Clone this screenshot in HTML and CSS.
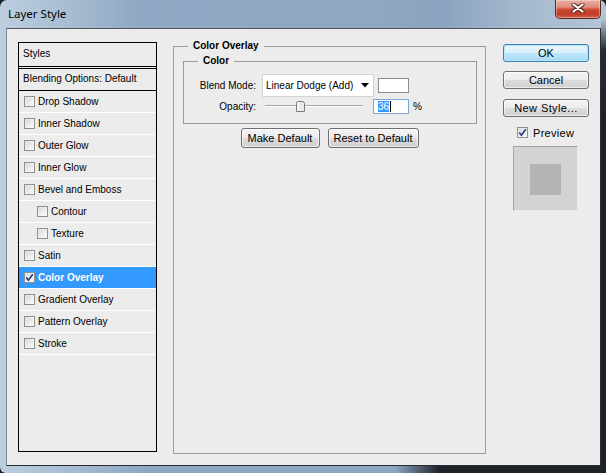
FILE: index.html
```html
<!DOCTYPE html>
<html>
<head>
<meta charset="utf-8">
<title>Layer Style</title>
<link rel="stylesheet" href="styles.css">
</head>
<body>
<div class="window">
  <div class="titlebar">
    <div class="title">Layer Style</div>
    <div class="close">
      <svg width="14" height="10" viewBox="0 0 14 10">
        <path d="M2.5 1.5 L11.5 8.5 M11.5 1.5 L2.5 8.5" stroke="#5a2a22" stroke-width="4.2" stroke-linecap="round"/>
        <path d="M2.5 1.5 L11.5 8.5 M11.5 1.5 L2.5 8.5" stroke="#ffffff" stroke-width="2.2" stroke-linecap="round"/>
      </svg>
    </div>
  </div>
  <div class="client">
    <div class="list">
      <div class="styles-head">Styles</div>
      <div class="blend-head">Blending Options: Default</div>
      <div class="item"><span class="cb"></span><span class="lbl">Drop Shadow</span></div>
      <div class="item"><span class="cb"></span><span class="lbl">Inner Shadow</span></div>
      <div class="item"><span class="cb"></span><span class="lbl">Outer Glow</span></div>
      <div class="item"><span class="cb"></span><span class="lbl">Inner Glow</span></div>
      <div class="item"><span class="cb"></span><span class="lbl">Bevel and Emboss</span></div>
      <div class="item sub"><span class="cb"></span><span class="lbl">Contour</span></div>
      <div class="item sub"><span class="cb"></span><span class="lbl">Texture</span></div>
      <div class="item"><span class="cb"></span><span class="lbl">Satin</span></div>
      <div class="item selected"><span class="cb"><svg width="9" height="9" viewBox="0 0 9 9"><path d="M1.2 4.6 L3.4 7.2 L7.8 1.3" fill="none" stroke="#26387f" stroke-width="1.6"/></svg></span><span class="lbl">Color Overlay</span></div>
      <div class="item"><span class="cb"></span><span class="lbl">Gradient Overlay</span></div>
      <div class="item"><span class="cb"></span><span class="lbl">Pattern Overlay</span></div>
      <div class="item"><span class="cb"></span><span class="lbl">Stroke</span></div>
    </div>

    <fieldset class="group">
      <legend>Color Overlay</legend>
      <fieldset class="subgroup">
        <legend>Color</legend>
        <div class="row row1">
          <span class="label">Blend Mode:</span>
          <div class="select">
            <span>Linear Dodge (Add)</span>
            <svg class="arrow" width="8" height="5" viewBox="0 0 8 5"><path d="M0 0 H8 L4 4.5 Z" fill="#000"/></svg>
          </div>
          <span class="swatch"></span>
        </div>
        <div class="row row2">
          <span class="label">Opacity:</span>
          <svg class="slider" width="98" height="15" viewBox="0 0 98 15">
            <rect x="0" y="6" width="98" height="1" fill="#a6a6a6"/>
            <rect x="0" y="7" width="98" height="1" fill="#ffffff"/>
            <path d="M31.5 4.5 Q31.5 2.5 33.5 2.5 H37.5 Q39.5 2.5 39.5 4.5 V12.5 H31.5 Z" fill="#e9e9e9" stroke="#7c7c7c"/>
            <rect x="32.5" y="3.5" width="1" height="8" fill="#ffffff"/>
          </svg>
          <div class="numbox"><span class="sel">36</span><span class="caret"></span></div>
          <span class="pct">%</span>
        </div>
      </fieldset>
      <div class="defaults">
        <button class="btn make">Make Default</button>
        <button class="btn reset">Reset to Default</button>
      </div>
    </fieldset>

    <div class="side">
      <button class="btn side-btn ok">OK</button>
      <button class="btn side-btn cancel">Cancel</button>
      <button class="btn side-btn newstyle">New Style...</button>
      <div class="preview-row">
        <span class="cb"><svg width="9" height="9" viewBox="0 0 9 9"><path d="M1.2 4.6 L3.4 7.2 L7.8 1.3" fill="none" stroke="#26387f" stroke-width="1.6"/></svg></span>
        <span class="preview-lbl">Preview</span>
      </div>
      <div class="preview-box"><div class="preview-swatch"></div></div>
    </div>
  </div>
</div>
</body>
</html>
```
FILE: styles.css
```css
* { box-sizing: border-box; }
html, body { margin: 0; padding: 0; }
body {
  width: 606px;
  height: 473px;
  overflow: hidden;
  background: #1b2027;
  font-family: "Liberation Sans", Arial, sans-serif;
  font-size: 10px;
  color: #000;
}
.window {
  width: 606px;
  height: 473px;
  display: flex;
  flex-direction: column;
  border-radius: 7px 7px 0 6px;
  overflow: hidden;
  background:
    linear-gradient(to right, rgba(29,34,41,0) 0, rgba(29,34,41,0) 395px, #1d2229 440px) left bottom / 100% 7px no-repeat,
    linear-gradient(to bottom, rgba(29,34,41,0) 18px, #262c34 50px, #1d2229 120px) right top / 5px 100% no-repeat,
    linear-gradient(to right, #bdcedf 0, #aabfd4 60px, #8fa9c4 140px, #8ea8c2 380px, #8aa3be 440px, #a5b9ce 520px, #b3c5d7 606px);
}
.titlebar {
  height: 28px;
  flex: 0 0 28px;
  display: flex;
  align-items: flex-start;
  padding-right: 5px;
}
.title {
  font-family: "Noto Sans", "Open Sans", sans-serif;
  font-size: 11.5px;
  line-height: 28px;
  padding-left: 8px;
  color: #000;
}
.close {
  margin-left: auto;
  width: 46px;
  height: 19px;
  border: 1px solid #5a2a22;
  border-top: none;
  border-radius: 0 0 5px 5px;
  background: linear-gradient(to bottom, #e9ad9f 0, #de8c7a 40%, #cc4d36 52%, #c23b26 78%, #d2634a 100%);
  box-shadow: inset 0 0 0 1px rgba(255,255,255,0.35);
  display: flex;
  align-items: center;
  justify-content: center;
  padding-bottom: 3px;
}
.close svg { display: block; }

.client {
  flex: 0 0 438px;
  margin: 0 5px 0 6px;
  border: 1px solid;
  border-color: #4e555d #2a2d31 #2a2d31 #7d8c9c;
  background: #ececec;
  display: flex;
  align-items: flex-start;
  padding: 11px 0 0 11px;
}

/* styles list */
.list {
  margin-top: 2px;
  width: 139px;
  height: 410px;
  border: 1px solid #000;
}
.styles-head {
  height: 24px;
  line-height: 22px;
  padding-left: 4px;
  border-bottom: 1px solid #000;
}
.blend-head {
  margin-top: 1px;
  height: 23px;
  line-height: 20px;
  padding-left: 4px;
  border-top: 1px solid #000;
  border-bottom: 1px solid #000;
}
.item {
  height: 22px;
  border-bottom: 1px solid #fff;
  display: flex;
  align-items: center;
  padding-left: 5px;
  padding-bottom: 1px;
}
.item.sub { padding-left: 18px; }
.item.selected {
  background: #3399ff;
  color: #fff;
  font-weight: bold;
}
.cb {
  width: 11px;
  height: 11px;
  flex: 0 0 11px;
  border: 1px solid #8e8f8f;
  background: linear-gradient(135deg, #d6d6d6 0, #eeeeee 60%, #fafafa 100%);
  box-shadow: inset 0 0 0 1px rgba(255,255,255,0.35);
  display: flex;
  align-items: center;
  justify-content: center;
}
.cb svg { display: block; }
.lbl { margin-left: 3px; }

/* main group */
fieldset { margin: 0; min-width: 0; }
.group {
  margin-left: 16px;
  width: 313px;
  height: 414px;
  border: 1px solid #9b9b9b;
  padding: 0 9px;
}
legend {
  font-weight: bold;
  font-size: 10px;
  line-height: 12px;
  padding: 0 5px;
}
.group > legend { margin-left: 5px; }
.subgroup {
  margin-top: 3px;
  width: 294px;
  height: 69px;
  border: 1px solid #9b9b9b;
  padding: 0;
}
.subgroup > legend { margin-left: 14px; }
.row {
  display: flex;
  align-items: center;
}
.row1 { margin-top: 7px; height: 23px; }
.row2 { margin-top: 2px; height: 15px; }
.label {
  width: 72px;
  text-align: right;
}
.select {
  margin-left: 6px;
  width: 112px;
  height: 23px;
  background: #fff;
  border: 1px solid #d4d4d4;
  display: flex;
  align-items: center;
  padding-left: 3px;
}
.arrow { margin-left: auto; margin-right: 4px; display: block; }
.swatch {
  margin-left: 4px;
  width: 31px;
  height: 15px;
  background: #fff;
  border: 1px solid #8c8c8c;
}
.slider { margin-left: 9px; display: block; }
.numbox {
  margin-left: 10px;
  width: 36px;
  height: 15px;
  background: #fff;
  border: 1px solid #7fa7d6;
  display: flex;
  align-items: center;
  padding-left: 4px;
}
.sel {
  background: #3399ff;
  color: #fff;
  line-height: 11px;
}
.caret {
  width: 1px;
  height: 11px;
  background: #000;
  margin-left: 1px;
}
.pct { margin-left: 4px; }

.defaults {
  margin-top: 4px;
  display: flex;
  justify-content: center;
  gap: 8px;
}
.btn {
  font-family: "Liberation Sans", Arial, sans-serif;
  font-size: 11px;
  color: #000;
  border: 1px solid #707070;
  border-radius: 3px;
  background: linear-gradient(to bottom, #f4f4f4 0, #ececec 48%, #dddddd 52%, #d0d0d0 100%);
  box-shadow: inset 0 0 0 1px rgba(255,255,255,0.6);
  padding: 0;
  margin: 0;
  display: flex;
  align-items: center;
  justify-content: center;
}
.make { width: 79px; height: 20px; }
.reset { width: 91px; height: 20px; }

/* side */
.side {
  margin-left: 17px;
  margin-top: 4px;
  display: flex;
  flex-direction: column;
  width: 86px;
}
.side-btn { width: 86px; height: 18px; }
.ok {
  border-color: #3c7fb1;
  background: linear-gradient(to bottom, #eaf6fd 0, #d9f0fc 48%, #bee6fd 52%, #a7d9f5 100%);
  box-shadow: inset 0 0 0 1px #b8e6fb;
}
.cancel { margin-top: 9px; }
.newstyle { margin-top: 10px; letter-spacing: 0.4px; }
.preview-row {
  margin-top: 10px;
  margin-left: 14px;
  display: flex;
  align-items: center;
  height: 11px;
}
.preview-lbl { margin-left: 5px; font-size: 11px; letter-spacing: 0.3px; }
.preview-box {
  margin-top: 8px;
  margin-left: 10px;
  width: 65px;
  height: 65px;
  border: 1px solid;
  border-color: #a3a3a3 #ececec #ececec #a3a3a3;
  background: #d3d3d3;
  padding: 17px 0 0 16px;
}
.preview-swatch {
  width: 31px;
  height: 31px;
  background: #b4b4b4;
}
```
